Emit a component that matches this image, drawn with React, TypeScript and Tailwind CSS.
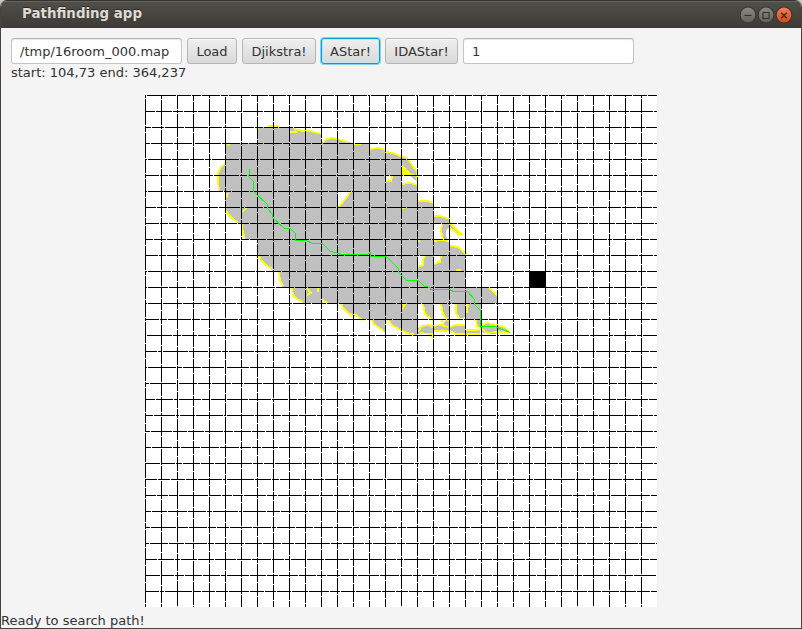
import React from "react";

const ORIGIN_X = 145;
const ORIGIN_Y = 95;
const ROOM = 16;
const COUNT = 32;

// Every wall of a room has one door, a single open cell.
function door(a: number, b: number, salt: number) {
  let h = (a + 1) * 7349 + (b + 1) * 191 + salt * 50021;
  h = Math.imul(h ^ (h >>> 16), 0x85ebca6b);
  h = Math.imul(h ^ (h >>> 13), 0xc2b2ae35);
  h = (h ^ (h >>> 16)) >>> 0;
  return 1 + (h % 15);
}

function buildWalls() {
  let d = "";
  for (let i = 0; i < COUNT; i++) {
    for (let j = 0; j < COUNT; j++) {
      const x = ORIGIN_X + i * ROOM;
      const y = ORIGIN_Y + j * ROOM;
      const g = door(i, j, 1);
      const k = door(i, j, 2);
      d += `M${x} ${y}h${g}v1h${-g}z`;
      if (g < 15) d += `M${x + g + 1} ${y}h${15 - g}v1h${g - 15}z`;
      d += `M${x} ${y}h1v${k}h-1z`;
      if (k < 15) d += `M${x} ${y + k + 1}h1v${15 - k}h-1z`;
    }
  }
  return d;
}

const WALLS = buildWalls();

const EXPLORED =
  "M257 127H290L295 129L310 131L321 134V143L323 142L327 139L332 138L338 139L347 142L353 143H369V149L380 148L385 150L386 152L393 153L400 156L407 158L410 162L417 172V181L414 180L402 166V184L410 183L417 185V201H428L433 203V216H440L449 219V223L461 234L458 234L449 227L446 230V235L448 241L450 246L458 247L465 253V287H489L497 296V303H481V320L482 325L487 323L497 325L504 327L510 332L500 333L492 334L484 333L480 330V334H465L455 334L449 331L435 331L433 334H419L415 335L402 331L392 325L389 320H385V332L373 325L372 320H363L353 315L343 308L342 304H328L321 300V303H303L293 295L292 288H283L280 280L279 272H274L261 260L259 256H257V239H245L243 233L242 223H238L226 212L225 191H219L218 182L219 171L225 164V143H257Z";

const OPEN_AREAS =
  "M338 192H350L347 197L343 202L339 208H338ZM386 176H392V180H386ZM433 224H442L441 230L443 240H433ZM418 256H425L423 260V265L418 267ZM434 256H441L440 262L434 264ZM418 304H423L425 314L433 321V325H425L418 328ZM434 304H441L443 314L447 319L442 325H434ZM449 304H456V313L460 319L465 317V325H455L449 327ZM465 304H468L467 313H465ZM465 320H476L477 327L480 330H465Z";

const FRONTIER = [
  "M257 129V128H259M268 126H279",
  "M290 132H296L295 129L302 131L310 131L321 134",
  "M227 146L229 144M225 164L221 167L218 173V182L219 190M228 193L226 198",
  "M226 210L228 214L233 219L238 222M243 212L246 208",
  "M242 223L243 233L245 238M257 246V247",
  "M259 256L261 260L266 265L274 270M279 272L280 280L283 286M292 288L293 295L297 299L303 302",
  "M306 287L309 291L311 293L307 295M318 288V292",
  "M321 299L328 303M342 304L343 308L348 313L353 317M353 313L363 320",
  "M372 320L375 325L384 331M389 320L392 325L402 331L413 335",
  "M323 142L327 139L332 138L338 139L347 142M353 144H361M369 149L380 148L385 150M386 152L393 153L400 156L407 158L410 162L417 172V181",
  "M386 181H392M392 176V179M402 184L410 183L417 185M417 201H428L433 203",
  "M350 192L347 197L343 202L339 207",
  "M434 216H440L449 219M442 225L441 230L443 240M449 222L461 234L458 234L449 227",
  "M434 241L443 240L448 241M450 246L458 247L465 253H467",
  "M425 256L423 260V265L418 267M441 256L440 262L434 264M456 270H461M489 288L495 293L497 296",
  "M402 304H405L403 309M423 304L425 314L433 320M441 304L443 314L449 321",
  "M456 304V313L460 319M468 304L467 313",
  "M400 329L406 333L414 334M418 332L422 326L430 325L433 328M420 333L432 334V338",
  "M434 326L440 325L448 327M434 331H448M450 327L456 325H465M450 331L456 334H480M465 330H479",
  "M442 320L443 325M476 320L477 326L481 329M481 326L487 323L497 325L504 327L509 331M482 329L487 333L496 332L509 332",
  "M402 208H405M418 241H420",
];

const ROUTE =
  "M249 168V173L248 176L253 181V191L267 204V208L272 214V217L284 228H290L295 233V240H305L313 243H322L330 251L339 253V254H367L370 252V256H386L398 268V272L406 280H418L424 286L430 287V289H449L453 291H467L474 299V304L480 310V326H494L502 329L510 332";

function MapView() {
  return (
    <svg
      className="block h-[512px] w-[512px] bg-white"
      viewBox="145 95 512 512"
      shapeRendering="crispEdges"
    >
      <path d={EXPLORED} fill="#c0c0c0" />
      <path d={OPEN_AREAS} fill="#fff" />
      <path d="M402 165L412 174H414L413 176H402Z" fill="#ffff00" />
      <g fill="none" stroke="#ffff00" strokeWidth="1.7">
        {FRONTIER.map((d) => (
          <path key={d} d={d} />
        ))}
      </g>
      <path d={WALLS} fill="#000" />
      <rect x="529" y="271" width="17" height="17" fill="#000" />
      <path
        d={ROUTE}
        fill="none"
        stroke="#00ff00"
        strokeWidth="1"
        transform="translate(.5 .5)"
      />
    </svg>
  );
}

function ToolButton({
  children,
  width,
  focused = false,
}: {
  children: React.ReactNode;
  width: string;
  focused?: boolean;
}) {
  return (
    <button
      className={`${width} h-[26px] rounded-[3px] border bg-linear-to-b from-[#efefef] to-[#d9d9d9] pt-[2px] text-center leading-[22px] whitespace-nowrap ${
        focused
          ? "border-[#039ed3] shadow-[0_0_0_1px_#8fd0e8,inset_0_0_0_1px_#c4e5f0]"
          : "border-[#b5b5b5] shadow-[inset_0_1px_0_#fafafa]"
      }`}
    >
      {children}
    </button>
  );
}

function Field({ value }: { value: string }) {
  return (
    <div className="h-[26px] w-[171px] rounded-[3px] border border-[#c4c4c4] border-t-[#b5b5b5] bg-white px-2 pt-[2px] leading-[22px] whitespace-nowrap shadow-[inset_0_1px_1px_#e6e6e6]">
      {value}
    </div>
  );
}

function WindowButton({ kind }: { kind: "min" | "max" | "close" }) {
  return (
    <svg className="block h-[18px] w-[18px]" viewBox="0 0 18 18">
      <defs>
        <linearGradient id={`face-${kind}`} x1="0" y1="0" x2="0" y2="1">
          <stop offset="0" stopColor={kind === "close" ? "#f47b55" : "#8b8a82"} />
          <stop offset="1" stopColor={kind === "close" ? "#dd4814" : "#62615b"} />
        </linearGradient>
      </defs>
      <circle cx="9" cy="9" r="8.3" fill="#33322e" />
      <circle cx="9" cy="9" r="7.4" fill={`url(#face-${kind})`} />
      <g fill="none" stroke="#33312c" strokeWidth="1.1">
        {kind === "min" && <path d="M5.5 9.5H12.5" />}
        {kind === "max" && <rect x="6" y="6.5" width="6" height="6" />}
        {kind === "close" && <path d="M6.2 6.7L11.8 12.3M11.8 6.7L6.2 12.3" strokeWidth="1.5" />}
      </g>
    </svg>
  );
}

export default function App() {
  return (
    <div className="h-[629px] w-[802px] bg-[#c9c8cd] font-['DejaVu_Sans',sans-serif] text-[13px] text-[#333]">
      <div className="flex h-full w-full flex-col overflow-hidden rounded-t-[7px] border border-t-0 border-[#45443f] bg-[#f4f4f4]">
        <header className="flex h-7 shrink-0 items-center justify-between border-t border-[#33322e] bg-linear-to-b from-[#504f49] to-[#3c3b37] pr-[8px] pl-[21px] shadow-[inset_0_1px_0_#65645e]">
          <h1 className="pb-[1px] text-[13.4px] leading-4 font-bold text-[#dfdbd2] [text-shadow:0_-1px_0_#2b2a27]">
            Pathfinding app
          </h1>
          <div className="flex">
            <WindowButton kind="min" />
            <WindowButton kind="max" />
            <WindowButton kind="close" />
          </div>
        </header>
        <div className="flex shrink-0 gap-[5px] pt-[10px] pl-[10px]">
          <Field value="/tmp/16room_000.map" />
          <ToolButton width="w-[50px]">Load</ToolButton>
          <ToolButton width="w-[74px]">Djikstra!</ToolButton>
          <ToolButton width="w-[59px]" focused>
            AStar!
          </ToolButton>
          <ToolButton width="w-[73px]">IDAStar!</ToolButton>
          <Field value="1" />
        </div>
        <p className="h-[31px] shrink-0 pl-[10px] leading-[17px]">start: 104,73 end: 364,237</p>
        <main className="flex shrink-0 pl-[144px]">
          <MapView />
        </main>
        <footer className="pt-[6px] leading-4">Ready to search path!</footer>
      </div>
    </div>
  );
}
